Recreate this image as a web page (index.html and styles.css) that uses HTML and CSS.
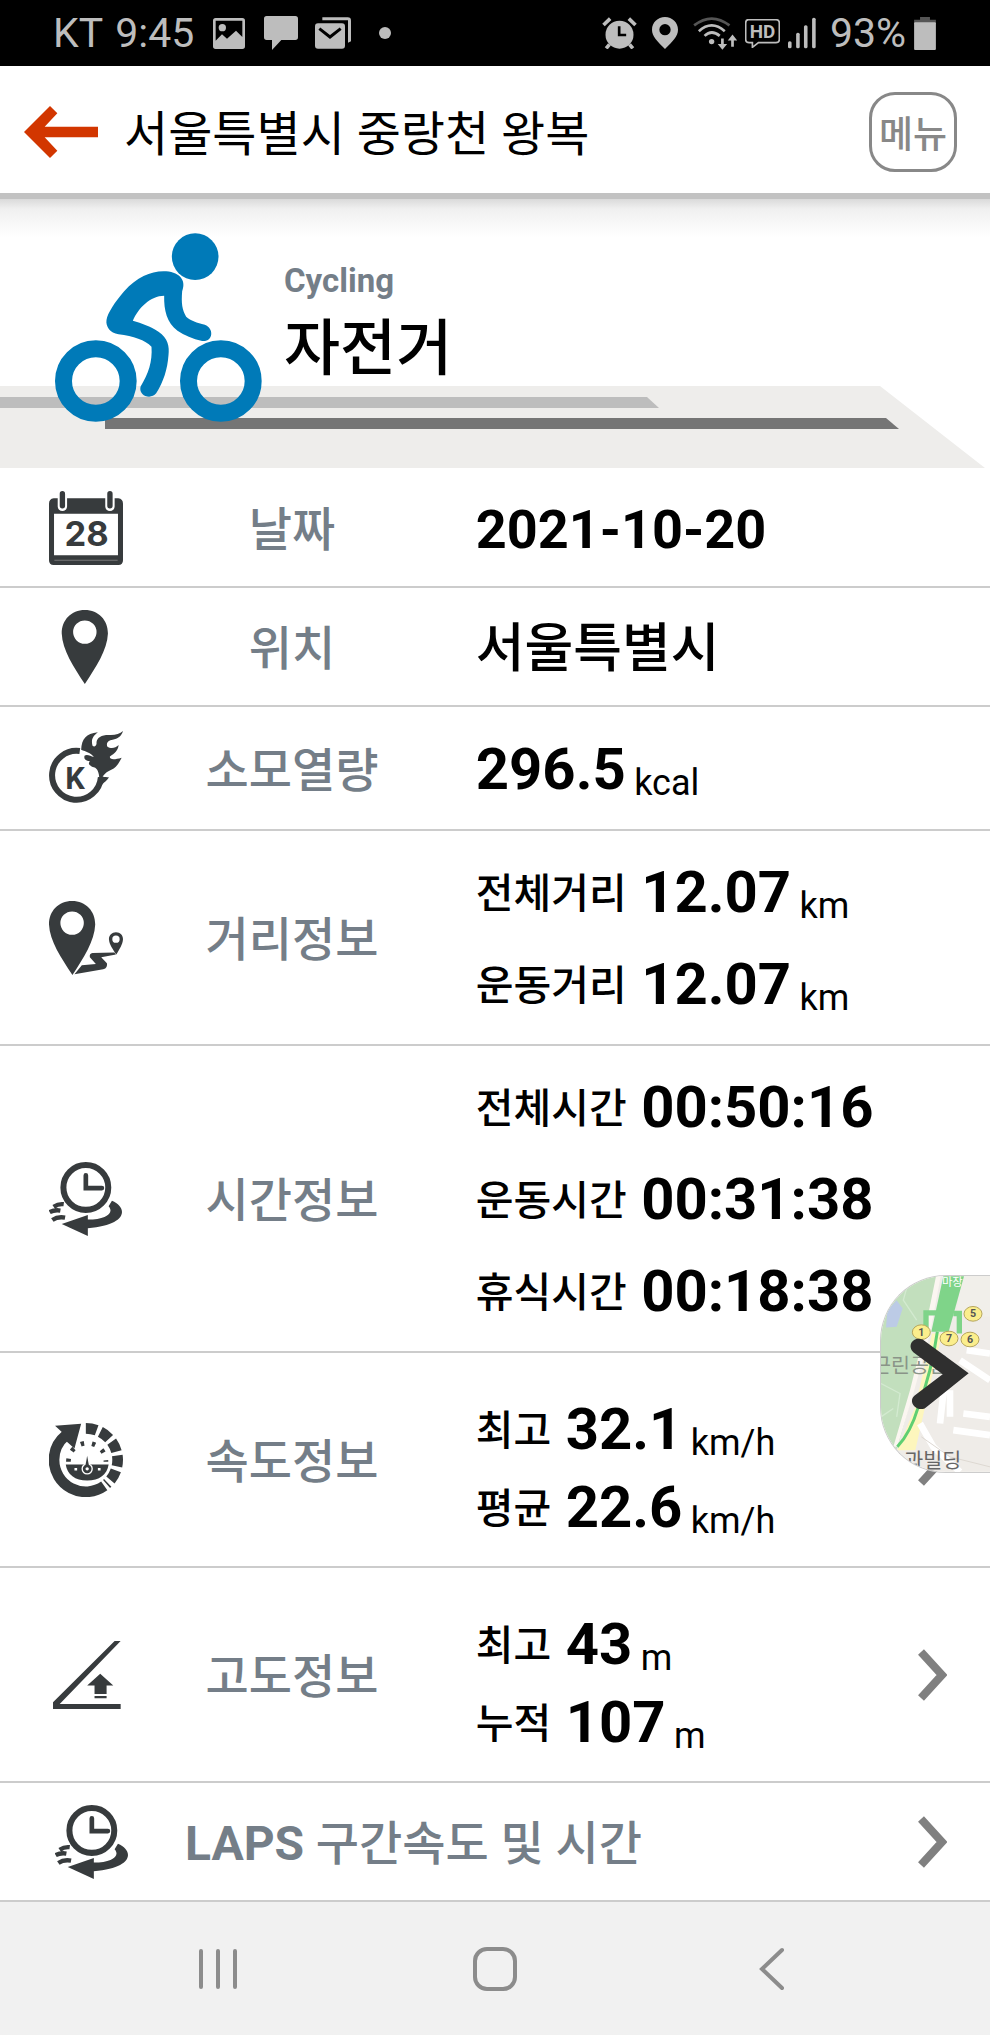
FILE: index.html
```html
<!DOCTYPE html>
<html lang="ko">
<head>
   <meta charset="utf-8">
   <title>서울특별시 중랑천 왕복</title>
   <meta name="viewport" content="width=device-width, initial-scale=1">
   <link rel="stylesheet" href="styles.css">
</head>
<body>
   <!-- Phone status bar -->
   <div class="status">
      <span class="carrier">KT</span>
      <span class="clock">9:45</span>
      <svg class="s-photo" width="32" height="31" viewBox="0 0 96 93"><path fill-rule="evenodd" d="M8 0H88Q96 0 96 8V85Q96 93 88 93H8Q0 93 0 85V8Q0 0 8 0ZM8 8V68L27 49L42 62L69 38L88 57V8Z"/><circle cx="28" cy="29" r="11"/></svg>
      <svg class="s-chat" width="34" height="34" viewBox="0 0 102 102"><path d="M8 0H94Q102 0 102 8V64Q102 72 94 72H52L24 102V72H8Q0 72 0 64V8Q0 0 8 0Z"/></svg>
      <svg class="s-mail" width="36" height="32" viewBox="0 0 108 94"><path d="M22 0H98Q108 0 108 10V72L99 76V9H22Z"/><rect y="18" width="90" height="76" rx="9"/><path d="M13 34L45 59L77 34" fill="none" stroke="#000" stroke-width="9"/></svg>
      <svg class="s-dot" width="12" height="12" viewBox="0 0 12 12"><circle cx="6" cy="6" r="6"/></svg>
      <div class="status-right">
         <svg width="35" height="32" viewBox="0 0 104 96"><circle cx="52" cy="53" r="42"/><path d="M4 24L24 5M80 5L100 24M22 82L12 94M82 82L92 94" fill="none" stroke="#bdbdbd" stroke-width="11"/><path d="M51 28V54H72" fill="none" stroke="#000" stroke-width="8"/></svg>
         <svg width="26" height="32" viewBox="0 0 78 96"><path fill-rule="evenodd" d="M39 0C61 0 78 17 78 38C78 58 62 72 39 96C16 72 0 58 0 38C0 17 17 0 39 0ZM39 21A17 17 0 1 0 39 55A17 17 0 1 0 39 21Z"/></svg>
         <svg width="44" height="33" viewBox="0 0 130 98"><g fill="none" stroke="#bdbdbd" stroke-width="8"><path d="M3 25Q55 -16 108 25" stroke="#555"/><path d="M17 42Q55 8 94 42M34 56Q55 36 79 56"/></g><circle cx="55" cy="73" r="8"/><path d="M83 64H91V80H101L87 97L73 80H83ZM113 88H121V70H131L117 52L103 70H113Z"/></svg>
         <svg width="35" height="29" viewBox="0 0 104 86"><path d="M10 2H92Q102 2 102 12V60Q102 70 92 70H40L22 84V70H12Q2 70 2 60V12Q2 2 10 2Z" fill="none" stroke="#bdbdbd" stroke-width="5"/><text x="52" y="57" class="hd">HD</text></svg>
         <svg width="28" height="32" viewBox="0 0 86 94"><rect y="72" width="11" height="22" rx="5"/><rect x="25" y="46" width="11" height="48" rx="5"/><rect x="49" y="23" width="11" height="71" rx="5"/><rect x="74" width="11" height="94" rx="5"/></svg>
         <span class="battery">93%</span>
         <svg width="22" height="33" viewBox="0 0 66 100"><path d="M18 0H48V8H66V22H0V8H18Z" fill="#555"/><rect y="16" width="66" height="84" rx="3"/></svg>
      </div>
   </div>

   <header class="header">
      <button class="back" aria-label="뒤로">
         <svg width="74" height="52" viewBox="0 0 222 156"><path d="M0 78L78 0L100 22L62 62H222V94H62L100 134L78 156Z" fill="#d23600"/></svg>
      </button>
      <h1>서울특별시 중랑천 왕복</h1>
      <button class="menu">메뉴</button>
   </header>

   <section class="hero">
      <svg class="road" viewBox="0 0 990 82" preserveAspectRatio="none">
         <path d="M0 0H880L985 82H0Z" fill="#eeedeb"/>
         <path d="M0 11H647L659 22H0Z" fill="#bdbdbd"/>
         <path d="M105 32H886L899 43H105Z" fill="#757575"/>
      </svg>
      <svg class="bike" width="207" height="189" viewBox="165 99 620 567">
         <g fill="none" stroke="#007ab8" stroke-width="51">
            <circle cx="287" cy="543" r="97"/>
            <circle cx="662" cy="543" r="97"/>
         </g>
         <g fill="#007ab8">
            <circle cx="585" cy="170" r="70"/>
            <path d="M319 360C322 340 345 305 372 274C410 232 450 214 490 214C535 214 560 238 546 274C543 310 546 330 558 350C572 362 590 368 614 374C642 384 640 426 606 423C578 416 552 406 532 392C500 368 491 330 492 287C450 288 416 322 398 362C425 370 450 378 475 395C504 415 508 440 505 465C502 508 490 545 468 580C452 600 415 588 421 560C445 520 457 485 454 440C435 420 400 409 355 403C330 399 316 380 319 360Z"/>
         </g>
      </svg>
      <div class="sport">
         <p class="sport-en">Cycling</p>
         <h2>자전거</h2>
      </div>
   </section>

   <main class="info">
      <div class="row">
         <svg class="icon" viewBox="0 0 221 221"><path fill-rule="evenodd" d="M14 22H207Q221 24 221 38V207Q221 221 207 221H14Q0 221 0 207V38Q0 24 14 22ZM15 68V192H206V68Z"/><path d="M16 207H205" stroke="#777" stroke-width="3"/><path d="M40 8V46M182 8V46" stroke="#fff" stroke-width="28" stroke-linecap="round"/><path d="M40 8V44M182 8V44" stroke="#373b3d" stroke-width="16" stroke-linecap="round"/><text x="112" y="163" class="cal">28</text></svg>
         <span class="name">날짜</span>
         <div class="values"><p><b class="date">2021-10-20</b></p></div>
      </div>
      <div class="row">
         <svg class="icon" viewBox="0 0 221 221"><path fill-rule="evenodd" d="M107 0C148 0 176 30 176 70C174 120 140 170 107 221C74 170 40 120 38 70C38 30 66 0 107 0ZM107 31A35 35 0 1 0 107 101A35 35 0 1 0 107 31Z"/></svg>
         <span class="name">위치</span>
         <div class="values"><p><b class="place">서울특별시</b></p></div>
      </div>
      <div class="row kcal">
         <svg class="icon" viewBox="0 0 221 221"><path d="M92 60A73 73 0 1 0 155 138" fill="none" stroke="#373b3d" stroke-width="18"/><path d="M96 56C98 24 110 8 146 4C128 18 126 28 130 44C135 48 140 46 142 38C140 18 160 10 185 12C200 12 212 8 221 0C216 16 205 24 190 26C178 28 170 34 174 46C184 54 198 52 208 42C206 58 196 68 182 76C180 84 190 88 217 80C208 98 200 110 186 116C176 120 168 126 160 136C168 138 172 138 179 138C172 150 160 156 150 170C152 140 150 118 138 110C124 106 114 100 122 90C108 88 104 84 106 74C112 68 124 74 134 78C124 64 110 62 96 56Z"/><text x="78" y="174" class="k">K</text></svg>
         <span class="name">소모열량</span>
         <div class="values"><p><b>296.5</b> <small>kcal</small></p></div>
      </div>
      <div class="row">
         <svg class="icon" viewBox="0 0 221 221"><path fill-rule="evenodd" d="M69 0C110 0 138 30 138 70C136 120 103 170 70 221C37 170 2 120 0 70C0 30 28 0 69 0ZM69 31A35 35 0 1 0 69 101A35 35 0 1 0 69 31Z"/><path fill-rule="evenodd" d="M200 93C213 93 221 102 221 114C220 130 210 144 201 160C191 144 180 130 179 114C179 102 188 93 200 93ZM200 103A11 11 0 1 0 200 125A11 11 0 1 0 200 103Z"/><path d="M76 219L98 192L140 188L122 168Q120 156 130 155L195 154L200 160L156 168L173 186Q176 200 162 204Z"/></svg>
         <span class="name">거리정보</span>
         <div class="values">
            <p><span>전체거리</span> <b>12.07</b> <small>km</small></p>
            <p><span>운동거리</span> <b>12.07</b> <small>km</small></p>
         </div>
      </div>
      <div class="row">
         <svg class="icon" viewBox="0 0 221 221"><circle cx="110" cy="76" r="67" fill="none" stroke="#373b3d" stroke-width="18"/><path d="M110 40V78H158" fill="none" stroke="#373b3d" stroke-width="14" stroke-linecap="round"/><path d="M188 116C236 136 236 188 116 198V221L38 185L116 158V172C170 172 196 152 178 132Z"/><path d="M14 134Q28 124 44 126M2 150Q16 142 34 145M10 173Q26 162 48 166" fill="none" stroke="#373b3d" stroke-width="13"/></svg>
         <span class="name">시간정보</span>
         <div class="values">
            <p><span>전체시간</span> <b>00:50:16</b></p>
            <p><span>운동시간</span> <b>00:31:38</b></p>
            <p><span>휴식시간</span> <b>00:18:38</b></p>
         </div>
      </div>
      <div class="row tight">
         <svg class="icon" viewBox="0 0 221 221"><g fill="none" stroke="#373b3d"><path d="M165 188A95 95 0 0 1 15 110A95 95 0 0 1 50 37" stroke-width="32"/><path d="M110 16A95 95 0 0 1 205 110A95 95 0 0 1 172 182" stroke-width="32" stroke-dasharray="33 12"/><path d="M58 116A56 56 0 0 1 170 116" stroke-width="14" stroke-dasharray="10 24"/></g><path d="M18 8L96 2L76 76L56 58L36 40L40 28Z"/><path d="M50 124H178C174 154 150 172 114 172S54 154 50 124Z"/><circle cx="114" cy="137" r="15" stroke="#fff" stroke-width="4"/><path d="M114 98L120 132H108Z"/><circle cx="114" cy="137" r="5" fill="#fff"/><path d="M76 138H84M146 138H154" stroke="#fff" stroke-width="7"/></svg>
         <span class="name">속도정보</span>
         <div class="values">
            <p><span>최고</span> <b>32.1</b> <small>km/h</small></p>
            <p><span>평균</span> <b>22.6</b> <small>km/h</small></p>
         </div>
         <button class="more" aria-label="속도정보 보기"><svg width="29" height="52" viewBox="0 0 29 52"><path d="M3 3L24 26L3 49"/></svg></button>
         <!-- Map drawer handle, lies over the rows -->
         <button class="map" aria-label="지도 열기">
            <svg width="109" height="196" viewBox="93 78 327 587">
               <rect x="93" y="78" width="327" height="587" fill="#efece8"/>
               <path d="M93 78H262L234 200L190 420L140 600L93 640Z" fill="#c2dfbd"/>
               <path d="M93 500L130 475M93 400L150 430L140 500M180 78L160 150L200 210" fill="none" stroke="#d3ead0" stroke-width="4"/>
               <path d="M112 180L140 150L158 175L140 230L108 232Z" fill="#bccbe6"/>
               <path d="M258 78H272L240 250L190 430L142 590L130 590L180 420L225 240Z" fill="#fbf6f1"/>
               <path d="M246 250H276L232 440L196 600H142L196 470Z" fill="#fdf6bd"/>
               <path d="M336 78H420V200H370L320 180Z" fill="#f1efea"/>
               <path d="M210 520L250 590L330 665M290 340L270 520M300 420V500M310 540L420 555M340 490L420 500M330 330L420 390M350 300L420 310" fill="none" stroke="#fff" stroke-width="20"/>
               <path d="M214 560L300 620L420 650" fill="none" stroke="#ddd8d2" stroke-width="3"/>
               <path d="M280 78H342L296 245H244Z" fill="#7fd489"/>
               <path d="M228 240V188H262M310 190H328V250" fill="none" stroke="#7fd489" stroke-width="16"/>
               <path d="M262 245C250 330 232 400 205 470C190 520 170 560 142 590" fill="none" stroke="#5fcf72" stroke-width="9"/>
               <text x="307" y="107" class="station">마장</text>
               <text x="66" y="370" class="spot">근린공원</text>
               <text x="163" y="654" class="spot dark">과빌딩</text>
               <g fill="#fbee8c" stroke="#b5a55c" stroke-width="3">
                  <ellipse cx="214" cy="246" rx="27" ry="22"/>
                  <ellipse cx="369" cy="191" rx="27" ry="22"/>
                  <ellipse cx="297" cy="265" rx="27" ry="22"/>
                  <ellipse cx="360" cy="268" rx="27" ry="22"/>
               </g>
               <text x="214" y="257" class="exit">1</text>
               <text x="369" y="202" class="exit">5</text>
               <text x="297" y="276" class="exit">7</text>
               <text x="360" y="279" class="exit">6</text>
               <path d="M190 306C170 286 190 258 218 268L356 369L224 475C194 484 174 452 194 436L278 372Z" fill="#2f2f2f"/>
            </svg>
         </button>
      </div>
      <div class="row tight">
         <svg class="icon" viewBox="0 0 221 221"><path d="M196 9H214L32 197H214V212H12V192Z"/><path d="M153 107L192 142H172V167H136V142H114ZM136 173H172V180H136Z"/></svg>
         <span class="name">고도정보</span>
         <div class="values">
            <p><span>최고</span> <b>43</b> <small>m</small></p>
            <p><span>누적</span> <b>107</b> <small>m</small></p>
         </div>
         <button class="more" aria-label="고도정보 보기"><svg width="29" height="52" viewBox="0 0 29 52"><path d="M3 3L24 26L3 49"/></svg></button>
      </div>
      <a class="row laps" href="#laps">
         <svg class="icon" viewBox="0 0 221 221"><circle cx="110" cy="76" r="67" fill="none" stroke="#373b3d" stroke-width="18"/><path d="M110 40V78H158" fill="none" stroke="#373b3d" stroke-width="14" stroke-linecap="round"/><path d="M188 116C236 136 236 188 116 198V221L38 185L116 158V172C170 172 196 152 178 132Z"/><path d="M14 134Q28 124 44 126M2 150Q16 142 34 145M10 173Q26 162 48 166" fill="none" stroke="#373b3d" stroke-width="13"/></svg>
         <span class="name"><b>LAPS</b> 구간속도 및 시간</span>
         <span class="more"><svg width="29" height="52" viewBox="0 0 29 52"><path d="M3 3L24 26L3 49"/></svg></span>
      </a>
   </main>

   <nav class="nav">
      <button aria-label="최근 앱"><svg width="44" height="44" viewBox="0 0 44 44"><path d="M5 4V40M22 4V40M39 4V40"/></svg></button>
      <button aria-label="홈"><svg width="44" height="44" viewBox="0 0 44 44"><rect x="2" y="2" width="40" height="40" rx="12"/></svg></button>
      <button aria-label="뒤로"><svg width="44" height="44" viewBox="0 0 44 44"><path d="M32 3L12 22L32 41"/></svg></button>
   </nav>
</body>
</html>
```

FILE: styles.css
```css
* {
   box-sizing: border-box;
}
body {
   display: flex;
   flex-direction: column;
   min-height: 100vh;
   margin: 0;
   background: #fff;
   color: #000;
   font-family: Roboto, "Noto Sans CJK KR", sans-serif;
}
h1, h2, p {
   margin: 0;
}
button {
   padding: 0;
   border: none;
   background: none;
   font-family: inherit;
   cursor: pointer;
}
svg {
   display: block;
   flex: none;
}

/* status bar */
.status {
   display: flex;
   align-items: center;
   height: 66px;
   padding: 0 54px 0 53px;
   background: #000;
   color: #bdbdbd;
   fill: #bdbdbd;
   font-size: 41px;
   line-height: 48px;
}
.clock {
   margin: 0 19px 0 12px;
}
.s-chat {
   margin-left: 19px;
}
.s-mail {
   margin-left: 17px;
}
.s-dot {
   margin-left: 28px;
}
.status-right {
   display: flex;
   align-items: center;
   gap: 8px;
   margin-left: auto;
}
.status-right svg:nth-child(-n+2) {
   margin-right: 7px;
}
.battery {
   margin-left: 6px;
}
.hd {
   font-size: 56px;
   font-weight: 700;
   text-anchor: middle;
}

/* title bar */
.header {
   display: flex;
   align-items: center;
   padding: 26px 33px 21px 24px;
   border-bottom: 6px solid #c2c2c2;
}
.header h1 {
   flex: 1;
   margin-left: 26px;
   padding-top: 5px;
   font-size: 48px;
   font-weight: 400;
   line-height: 72px;
}
.menu {
   width: 88px;
   height: 80px;
   border: 3px solid #888;
   border-radius: 26px;
   color: #888;
   font-size: 37px;
   font-weight: 500;
}

/* sport banner */
.hero {
   position: relative;
   display: flex;
   height: 270px;
   padding: 34px 0 0 55px;
   background: linear-gradient(#dadada, #f0f0f0 10px, #fff 38px);
}
.road {
   position: absolute;
   left: 0;
   bottom: 1px;
   width: 100%;
   height: 82px;
}
.bike {
   position: relative;
}
.sport {
   position: relative;
   margin: 26px 0 0 22px;
}
.sport-en {
   color: #747e88;
   font-size: 33px;
   font-weight: 700;
   line-height: 44px;
}
.sport h2 {
   font-size: 61px;
   font-weight: 500;
   line-height: 92px;
}

/* record rows */
.row {
   position: relative;
   display: grid;
   grid-template-columns: 17% 25% 1fr auto;
   align-items: center;
   min-height: 119px;
   border-bottom: 2px solid #ccc;
   color: inherit;
   text-decoration: none;
}
.icon {
   width: 74px;
   height: 74px;
   margin-left: 49px;
   fill: #373b3d;
}
.cal {
   font-family: Inter, sans-serif;
   font-size: 103px;
   font-weight: 700;
   text-anchor: middle;
}
.k {
   font-size: 92px;
   font-weight: 700;
   text-anchor: middle;
}
.name {
   padding-top: 5px;
   color: #747e88;
   font-size: 47px;
   font-weight: 500;
   line-height: 64px;
   text-align: center;
}
.values {
   padding: 23px 0 6px 60px;
}
.values p {
   height: 92px;
   line-height: 92px;
   font-size: 34px;
   white-space: nowrap;
}
.values span {
   margin-right: 6px;
   font-size: 41px;
   font-weight: 500;
   line-height: 1;
   vertical-align: 4px;
}
.values b {
   font-size: 58px;
   line-height: 1;
}
.values .date {
   font-size: 54px;
}
.values .place {
   font-size: 53px;
   font-weight: 500;
}
.values small {
   font-size: 36px;
   line-height: 1;
   vertical-align: -6px;
}
.row:nth-child(-n+2) .values {
   padding-top: 21px;
   padding-bottom: 4px;
}
.kcal {
   min-height: 124px;
}
.tight .values {
   padding-top: 45px;
   padding-bottom: 12px;
}
.tight .values p {
   height: 78px;
   line-height: 78px;
}
.more {
   margin-right: 43px;
}
.more path {
   fill: none;
   stroke: #808080;
   stroke-width: 8;
}
.map {
   position: absolute;
   top: -78px;
   right: 0;
   overflow: hidden;
   border: solid #ccc;
   border-width: 1px 0 1px 1px;
   border-radius: 66px 0 0 66px;
}
.station {
   fill: #fff;
   font-size: 34px;
   text-anchor: middle;
}
.spot {
   fill: #8a9488;
   font-size: 62px;
}
.dark {
   fill: #666;
}
.exit {
   fill: #555;
   font-size: 32px;
   font-weight: 700;
   text-anchor: middle;
}
.laps {
   grid-template-columns: 185px 1fr auto;
}
.laps .icon {
   margin-left: 55px;
}
.laps .name {
   text-align: left;
}
.laps b {
   font-size: 48px;
}

/* navigation bar */
.nav {
   display: flex;
   flex: 1;
   align-items: center;
   justify-content: space-around;
   min-height: 120px;
   padding: 0 80px;
   background: #f1f1f1;
}
.nav svg {
   fill: none;
   stroke: #8c8c8c;
   stroke-width: 4;
   stroke-linecap: round;
}
```
